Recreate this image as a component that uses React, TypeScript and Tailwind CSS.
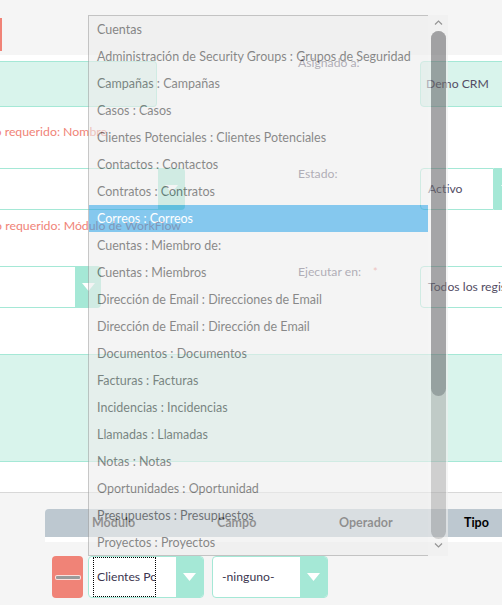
import React from 'react';

const options = [
  'Cuentas',
  'Administración de Security Groups : Grupos de Seguridad',
  'Campañas : Campañas',
  'Casos : Casos',
  'Clientes Potenciales : Clientes Potenciales',
  'Contactos : Contactos',
  'Contratos : Contratos',
  'Correos : Correos',
  'Cuentas : Miembro de:',
  'Cuentas : Miembros',
  'Dirección de Email : Direcciones de Email',
  'Dirección de Email : Dirección de Email',
  'Documentos : Documentos',
  'Facturas : Facturas',
  'Incidencias : Incidencias',
  'Llamadas : Llamadas',
  'Notas : Notas',
  'Oportunidades : Oportunidad',
  'Presupuestos : Presupuestos',
  'Proyectos : Proyectos',
];

const Caret: React.FC = () => (
  <svg width="13" height="8" viewBox="0 0 13 8">
    <path d="M0 0 H13 L6.5 8 Z" fill="#ffffff" />
  </svg>
);

// teal button on the right of a select
const SelectButton: React.FC<{ className?: string }> = ({ className = '' }) => (
  <div className={`flex items-center justify-center bg-[#a5e8d6] ${className}`}>
    <Caret />
  </div>
);

// open native-looking listbox, drawn translucent over the form
const ModuleDropdown: React.FC = () => (
  <div className="absolute left-[88px] top-[15px] flex h-[541px] w-[360px] opacity-60">
    <div className="w-[340px] border-y border-l border-[#a3a3a3] bg-[#ededed]">
      {options.map((o) => (
        <div
          key={o}
          className={`flex h-[27px] items-center whitespace-nowrap pl-[8px] pt-[2px] text-[12.5px] ${
            o === 'Correos : Correos' ? 'bg-[#35a5e4] text-white' : 'text-[#3a3a3a]'
          }`}
        >
          {o}
        </div>
      ))}
    </div>
    <div className="flex w-[20px] flex-col items-center bg-[#efefef]">
      <svg className="mt-[5px]" width="9" height="5" viewBox="0 0 9 5">
        <path d="M1 4.5 L4.5 1 L8 4.5" fill="none" stroke="#555" strokeWidth="1.2" />
      </svg>
      <div className="mt-[6px] flex h-[508px] w-[15px] flex-col rounded-full bg-[#b0b0b0]">
        <div className="h-[365px] rounded-full bg-[#6b6b6e]" />
      </div>
      <svg className="mt-[4px]" width="9" height="5" viewBox="0 0 9 5">
        <path d="M1 0.5 L4.5 4 L8 0.5" fill="none" stroke="#555" strokeWidth="1.2" />
      </svg>
    </div>
  </div>
);

export default function App() {
  return (
    <div className="relative h-[605px] w-[502px] overflow-hidden bg-[#f5f5f5] font-['Lato',sans-serif] text-[12.2px] text-[#534d64]">
      {/* top bar with cut-off button */}
      <div className="h-[55px] pt-[18px]">
        <div className="h-[33px] w-[2px] bg-[#f08377]" />
      </div>

      {/* form panel */}
      <div className="flex h-[438px] flex-col border-b border-[#d8d8d8] bg-white">
        <div className="mt-[6px] flex h-[46px] shrink-0">
          <div className="w-[157px] shrink-0 rounded-r-[4px] border-y border-r border-[#a5e8d6] bg-[#d9f4ec]" />
          <div className="-mt-[8px] ml-[141px] h-[20px] w-[122px] shrink-0 leading-[20px]">Asignado a:</div>
          <div className="flex w-[100px] shrink-0 items-center rounded-l-[4px] border border-[#a5e8d6] bg-[#d9f4ec] pl-[5px]">
            Demo CRM
          </div>
        </div>

        <div className="mt-[15px] flex h-[20px] w-[107px] shrink-0 justify-end overflow-hidden whitespace-nowrap text-[12.3px] leading-[20px] text-[#f08377]">
          Falta campo requerido: Nombre
        </div>

        <div className="mt-[26px] flex h-[42px] shrink-0">
          <div className="w-[158px] shrink-0 border-y border-[#a5e8d6] bg-white" />
          <SelectButton className="w-[27px] shrink-0 rounded-r-[4px]" />
          <div className="-mt-[4px] ml-[113px] h-[20px] w-[122px] shrink-0 leading-[20px]">Estado:</div>
          <div className="flex w-[74px] shrink-0 items-center rounded-l-[4px] border border-[#a5e8d6] bg-white pl-[7px]">
            Activo
          </div>
          <SelectButton className="w-[27px] shrink-0" />
        </div>

        <div className="mt-[6px] flex h-[20px] w-[181px] shrink-0 justify-end overflow-hidden whitespace-nowrap text-[12.3px] leading-[20px] text-[#f08377]">
          Falta campo requerido: Módulo de WorkFlow
        </div>

        <div className="mt-[30px] flex h-[42px] shrink-0">
          <div className="w-[75px] shrink-0 border-y border-[#a5e8d6] bg-white" />
          <SelectButton className="w-[26px] shrink-0 rounded-r-[4px]" />
          <div className="-mt-[4px] ml-[197px] flex h-[20px] w-[122px] shrink-0 leading-[20px]">
            Ejecutar en:<span className="ml-[12px] text-[11px] text-[#f08377]">*</span>
          </div>
          <div className="flex w-[100px] shrink-0 items-center whitespace-nowrap rounded-l-[4px] border border-[#a5e8d6] bg-white pl-[7px]">
            Todos los registros
          </div>
        </div>

        <div className="mt-[46px] h-[108px] shrink-0 border-y border-[#a5e8d6] bg-[#d9f4ec]" />
      </div>

      {/* conditions table */}
      <div className="ml-[45px] mt-[16px]">
        <div className="flex h-[28px] items-center rounded-tl-[4px] bg-[#bdc8d0] text-[12.5px] font-bold text-black">
          <div className="w-[172px] pl-[47px]">Módulo</div>
          <div className="w-[122px]">Campo</div>
          <div className="w-[125px]">Operador</div>
          <div>Tipo</div>
        </div>
        <div className="h-[5px] bg-white" />
        <div className="flex gap-[5px] pl-[7px] pt-[14px]">
          <div className="flex h-[42px] w-[31px] items-center justify-center rounded-[4px] bg-[#f08377]">
            <div className="h-[3px] w-[24px] rounded-[1px] bg-[#9a9a9a] shadow-[0_0_0_1px_rgba(255,255,255,0.75)]" />
          </div>
          <div className="flex h-[42px] w-[116px] overflow-hidden rounded-[4px] border border-[#a5e8d6] bg-white">
            <div className="ml-[4px] flex w-[63px] items-center overflow-hidden whitespace-nowrap border border-dotted border-black pl-[3px] text-[#3c3650]">
              Clientes Potenciales
            </div>
            <div className="flex-1" />
            <SelectButton className="w-[27px]" />
          </div>
          <div className="ml-[3px] flex h-[42px] w-[116px] overflow-hidden rounded-[4px] border border-[#a5e8d6] bg-white">
            <div className="flex flex-1 items-center pl-[9px] text-[#3c3650]">-ninguno-</div>
            <SelectButton className="w-[27px]" />
          </div>
        </div>
      </div>

      <ModuleDropdown />
    </div>
  );
}
